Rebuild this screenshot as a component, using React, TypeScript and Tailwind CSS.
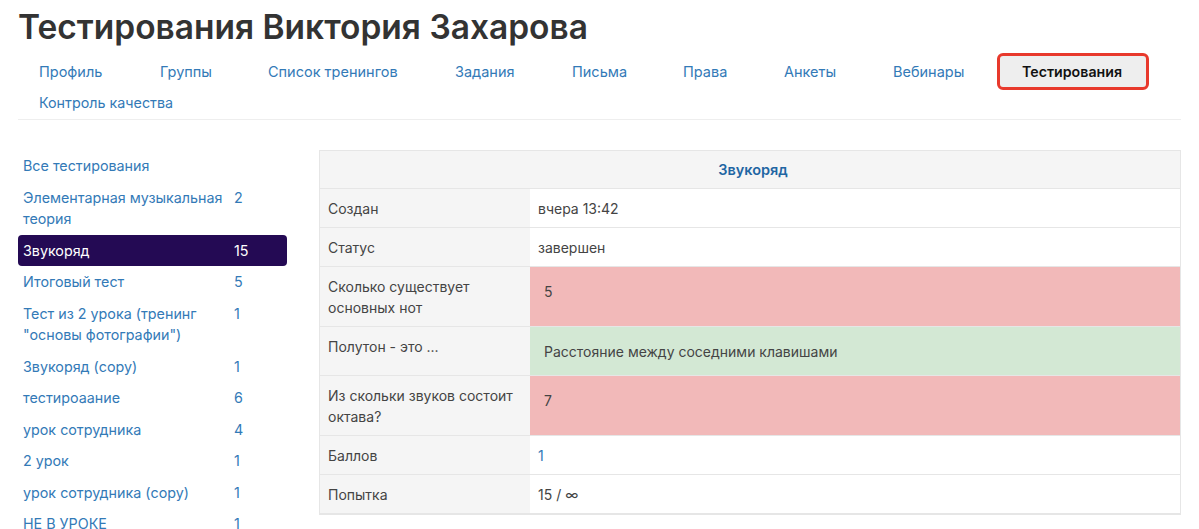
const nav: [string, string][] = [
  ["Профиль", "w-[105px]"],
  ["Группы", "w-[92px]"],
  ["Список тренингов", "w-[171px]"],
  ["Задания", "w-[101px]"],
  ["Письма", "w-[95px]"],
  ["Права", "w-[85px]"],
  ["Анкеты", "w-[93px]"],
  ["Вебинары", "w-[113px]"],
];

const side: [string, string, boolean?][] = [
  ["Элементарная музыкальная теория", "2"],
  ["Звукоряд", "15", true],
  ["Итоговый тест", "5"],
  ['Тест из 2 урока (тренинг "основы фотографии")', "1"],
  ["Звукоряд (copy)", "1"],
  ["тестироаание", "6"],
  ["урок сотрудника", "4"],
  ["2 урок", "1"],
  ["урок сотрудника (copy)", "1"],
  ["НЕ В УРОКЕ", "1"],
];

function Row({ label, value, tone, h, valueClass }: { label: string; value: string; tone?: string; h: string; valueClass?: string }) {
  return (
    <div className={`flex border-b border-[#e6e6e6] ${h}`}>
      <div className="w-[210px] shrink-0 bg-[#f5f5f5] pl-2 pr-2 pt-[9px] leading-[21px] text-[#444]">{label}</div>
      <div className={`flex-1 flex items-center ${tone ?? "bg-white pl-2"} ${valueClass ?? "text-[#444]"}`}>{value}</div>
    </div>
  );
}

export default function App() {
  return (
    <div className="h-[529px] w-[1199px] overflow-hidden bg-white text-[14px] font-['Inter','Noto_Sans',sans-serif]">
      <div className="px-[18px]">
        <h1 className="pt-[7px] text-[33.5px] leading-[40px] font-semibold text-[#333]">Тестирования Виктория Захарова</h1>
        <div className="mt-[9px] flex flex-wrap border-b border-[#eeeeee] pb-[1px] text-[14.5px]">
          {nav.map(([n, w]) => (
            <a key={n} className={`mr-[16px] h-[31px] whitespace-nowrap px-[21px] leading-[31px] text-[#337ab7] ${w}`}>{n}</a>
          ))}
          <a className="-my-[3px] -ml-[4px] h-[37px] w-[152px] whitespace-nowrap rounded-[6px] border-[3px] border-[#e8392c] bg-[#eeeeee] pl-[22px] leading-[31px] font-semibold text-[14.2px] text-[#111]">Тестирования</a>
          <a className="w-full h-[31px] px-[21px] leading-[31px] text-[14.3px] text-[#337ab7]">Контроль качества</a>
        </div>
        <div className="mt-[30px] flex">
          <div className="w-[269px] shrink-0 text-[14.3px] text-[#337ab7]">
            <div className="px-[5px] py-[5px] leading-[21.5px]">Все тестирования</div>
            {side.map(([t, c, active]) => (
              <div key={t} className={`flex rounded-[4px] px-[5px] py-[5px] leading-[21.5px] ${active ? "bg-[#240a54] text-white" : ""}`}>
                <span className="w-[211px] shrink-0">{t}</span>
                <span>{c}</span>
              </div>
            ))}
          </div>
          <div className="ml-[32px] w-[870px] self-start border border-[#e6e6e6] text-[14px]">
            <div className="flex h-[38px] items-center justify-center border-b border-[#e6e6e6] bg-[#f5f5f5] pl-[6px] text-[14.5px] font-semibold text-[#1f66a3]">Звукоряд</div>
            <Row label="Создан" value="вчера 13:42" h="h-[39px]" />
            <Row label="Статус" value="завершен" h="h-[39px]" />
            <Row label="Сколько существует основных нот" value="5" tone="bg-[#f2b9b9] pl-[14px] pb-[10px]" h="h-[60px]" />
            <Row label="Полутон - это ..." value="Расстояние между соседними клавишами" tone="bg-[#d3e8d4] pl-[14px]" h="h-[49px]" />
            <Row label="Из скольки звуков состоит октава?" value="7" tone="bg-[#f2b9b9] pl-[14px] pb-[10px]" h="h-[60px]" />
            <Row label="Баллов" value="1" h="h-[39px]" valueClass="text-[#337ab7]" />
            <Row label="Попытка" value="15 / ∞" h="h-[39px]" />
          </div>
        </div>
      </div>
    </div>
  );
}
